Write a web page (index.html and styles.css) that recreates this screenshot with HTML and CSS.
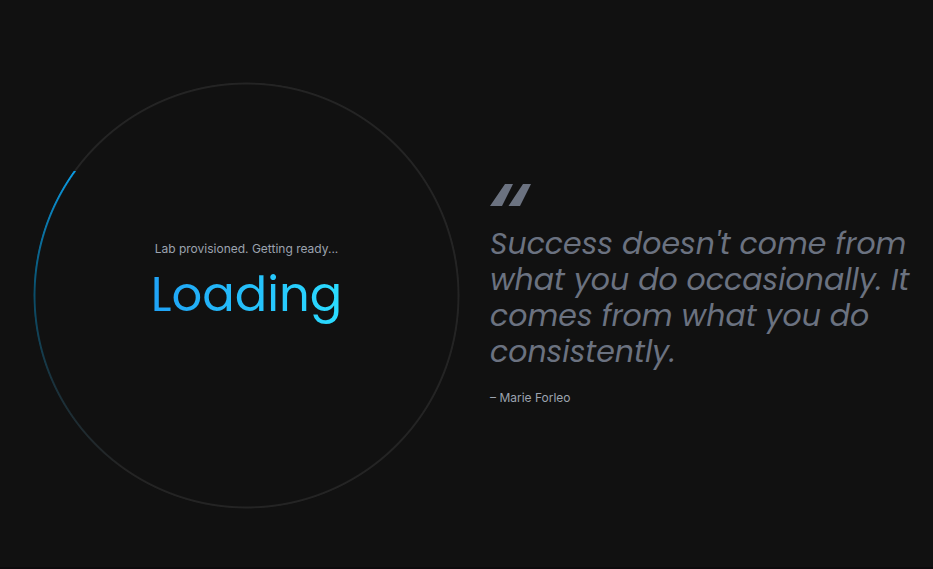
FILE: index.html
```html
<!DOCTYPE html>
<html lang="en">
<head>
<meta charset="utf-8">
<meta name="viewport" content="width=device-width, initial-scale=1">
<title>Loading</title>
<link rel="stylesheet" href="styles.css">
</head>
<body>
<main class="loader">
  <section class="ring" role="status">
    <div class="ring-sweep" aria-hidden="true"></div>
    <p class="ring-status">Lab provisioned. Getting ready...</p>
    <h1 class="ring-title">Loading</h1>
  </section>
  <figure class="quote">
    <svg class="quote-mark" viewBox="0 0 42 22" aria-hidden="true">
      <path d="M0 22 15 0H23L12 22ZM18.500 22 33 0H41L30 22Z"/>
    </svg>
    <blockquote class="quote-text">Success doesn't come from what you do occasionally. It comes from what you do consistently.</blockquote>
    <figcaption class="quote-author">– Marie Forleo</figcaption>
  </figure>
</main>
</body>
</html>
```
FILE: styles.css
```css
* {
  box-sizing: border-box;
}

body {
  margin: 0;
  background: #111;
  color: #9ca3af;
  font-family: Inter, "Liberation Sans", sans-serif;
  font-size: 12px;
  line-height: 16px;
}

.loader {
  display: grid;
  grid-template-columns: 1fr 1fr;
  align-items: center;
  gap: 30px;
  min-height: 100vh;
  padding: 23px 16px 0 33px;
  border-bottom: 2px solid #0d0b0d;
}

.ring {
  display: grid;
  grid-template-rows: 1fr auto auto 1fr;
  justify-items: center;
  aspect-ratio: 1;
}

.ring-sweep {
  grid-area: 1 / 1 / -1 / -1;
  width: 100%;
  height: 100%;
  border-radius: 50%;
  background:
    conic-gradient(from 306deg, transparent 270deg, #0a4a6660 300deg, #0a4f6c 325deg, #0b9be3 360deg),
    #242424;
  mask: radial-gradient(closest-side, transparent calc(100% - 3px), #000 calc(100% - 2px), #000 calc(100% - 1px), transparent 100%);
}

.ring-status {
  grid-area: 2 / 1;
  margin: 0;
}

.ring-title {
  grid-area: 3 / 1;
  margin: 0 0 16px;
  background: linear-gradient(90deg, #1fa2f6, #2bdcff);
  background-clip: text;
  color: transparent;
  font-family: Poppins, Inter, sans-serif;
  font-size: 48px;
  font-weight: 400;
  line-height: 76px;
}

.quote {
  margin: 0;
}

.quote-mark {
  display: block;
  width: 42px;
  height: 22px;
  fill: #6b7280;
}

.quote-text {
  margin: 20px 0;
  color: #6b7280;
  font-family: Poppins, Inter, sans-serif;
  font-size: 30px;
  font-style: italic;
  font-weight: 400;
  line-height: 36px;
}
```
